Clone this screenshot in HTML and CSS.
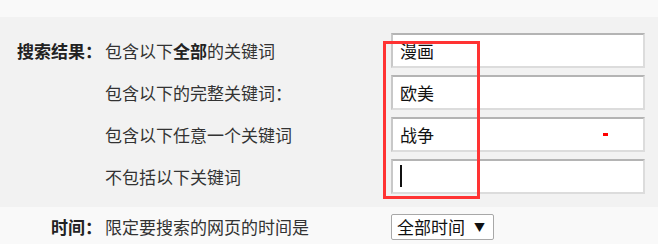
FILE: index.html
```html
<!DOCTYPE html>
<html lang="zh-CN">
<head>
    <meta charset="UTF-8">
    <title>高级搜索</title>
    <link rel="stylesheet" href="styles.css">
</head>
<body>
    <div class="topbar"></div>
    <div class="keywords">
        <div class="row">
            <span class="label">搜索结果：</span>
            <span class="desc">包含以下<b>全部</b>的关键词</span>
            <input class="field" type="text" value="漫画">
        </div>
        <div class="row">
            <span class="label"></span>
            <span class="desc">包含以下的完整关键词：</span>
            <input class="field" type="text" value="欧美">
        </div>
        <div class="row">
            <span class="label"></span>
            <span class="desc">包含以下任意一个关键词</span>
            <input class="field" type="text" value="战争">
        </div>
        <div class="row">
            <span class="label"></span>
            <span class="desc">不包括以下关键词</span>
            <span class="field-wrap">
                <input class="field" type="text" value="">
                <span class="caret"></span>
            </span>
        </div>
        <!-- annotation marks drawn over the form -->
        <div class="mark-box"></div>
        <div class="mark-dot"></div>
    </div>
    <div class="row time">
        <span class="label">时间：</span>
        <span class="desc">限定要搜索的网页的时间是</span>
        <div class="select">
            <span>全部时间</span>
            <span class="arrow">▼</span>
        </div>
    </div>
</body>
</html>
```

FILE: styles.css
```css
* {
    margin: 0;
    padding: 0;
    box-sizing: border-box;
}

body {
    width: 658px;
    height: 244px;
    overflow: hidden;
    background: #f9f9f9;
    font-family: "Noto Sans CJK SC", "Microsoft YaHei", sans-serif;
    font-size: 17px;
    color: #333;
}

.topbar {
    height: 17px;
    background: #f9f9f9;
}

.keywords {
    position: relative;
    background: #f2f2f2;
    padding: 16px 0 13px;
    display: flex;
    flex-direction: column;
    gap: 7px;
}

.row {
    display: flex;
    align-items: center;
    height: 35px;
}

.label {
    width: 102px;
    text-align: right;
    font-weight: bold;
    color: #222;
}

.desc {
    width: 289px;
    padding-left: 3px;
    white-space: nowrap;
}

.desc b {
    color: #222;
}

.field {
    width: 254px;
    height: 35px;
    padding: 0 7px;
    border: 2px solid;
    border-color: #b4b4b4 #dcdcdc #dcdcdc #c8c8c8;
    background: #fff;
    font-family: inherit;
    font-size: 17px;
    color: #111;
    outline: none;
}

.field-wrap {
    position: relative;
    display: block;
    height: 35px;
}

.caret {
    position: absolute;
    left: 9px;
    top: 6px;
    width: 2px;
    height: 22px;
    background: #111;
}

.mark-box {
    position: absolute;
    left: 383px;
    top: 24px;
    width: 97px;
    height: 158px;
    border: 3px solid #ff3333;
}

.mark-dot {
    position: absolute;
    left: 603px;
    top: 116px;
    width: 5px;
    height: 3px;
    background: #ff0000;
}

.time {
    height: 37px;
    padding-top: 2px;
}

.select {
    display: flex;
    align-items: center;
    justify-content: space-between;
    width: 103px;
    height: 26px;
    padding: 0 8px 0 5px;
    border: 1px solid #a8a8a8;
    border-radius: 2px;
    background: #fff;
    color: #111;
}

.arrow {
    font-size: 11px;
}
```
